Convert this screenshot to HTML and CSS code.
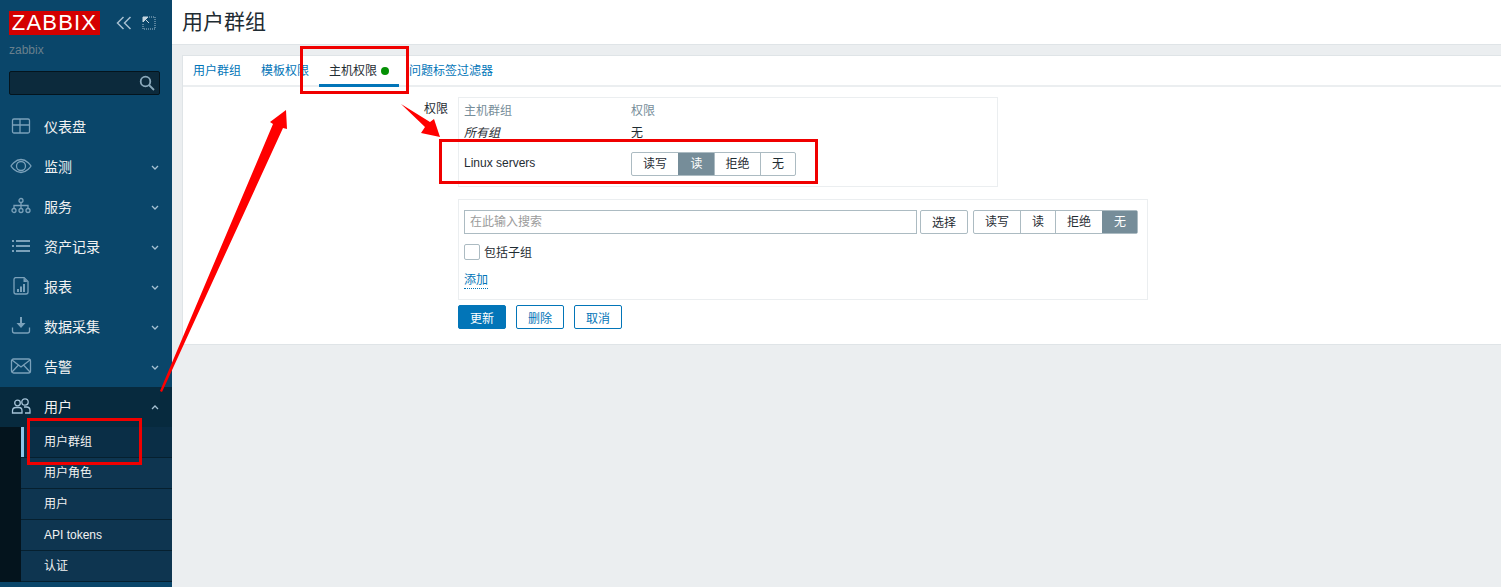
FILE: index.html
```html
<!DOCTYPE html>
<html lang="zh-CN">
<head>
  <meta charset="UTF-8">
  <title>用户群组 | Zabbix</title>
  <link rel="stylesheet" href="styles.css">
</head>
<body>

  <aside class="sidebar">
    <div class="brand">
      <span class="logo">ZABBIX</span>
      <div class="brand-tools">
        <svg class="tool" width="16" height="14" viewBox="0 0 16 14"><path d="M7.5 1 1.5 7l6 6M14.5 1l-6 6 6 6"/></svg>
        <svg class="tool" width="14" height="14" viewBox="0 0 14 14"><path class="dots" d="M7 1h6v12H1V7"/><path class="solid" d="M1 1h5L1 6zM3 3l4 4"/></svg>
      </div>
    </div>
    <div class="server-name">zabbix</div>
    <div class="search-box">
      <svg width="16" height="16" viewBox="0 0 16 16"><circle cx="6.5" cy="6.5" r="4.8"/><path d="m10 10 5 5"/></svg>
    </div>

    <nav class="menu">
      <a class="menu-item">
        <svg class="menu-icon" width="22" height="18" viewBox="0 0 22 18"><path d="M4 2h14a1.500 1.500 0 0 1 1.500 1.500v11A1.500 1.500 0 0 1 18 16H4a1.500 1.500 0 0 1-1.500-1.500v-11A1.500 1.500 0 0 1 4 2zM2.500 8h17M10 2v14"/></svg>
        <span>仪表盘</span>
      </a>
      <a class="menu-item">
        <svg class="menu-icon" width="22" height="18" viewBox="0 0 22 18"><path d="M1 9s4-6.500 10-6.500S21 9 21 9s-4 6.500-10 6.500S1 9 1 9z"/><circle cx="11" cy="9" r="4.500"/></svg>
        <span>监测</span>
        <svg class="chevron" width="8" height="5" viewBox="0 0 8 5"><path d="m1 1 3 3 3-3"/></svg>
      </a>
      <a class="menu-item">
        <svg class="menu-icon" width="22" height="18" viewBox="0 0 22 18"><circle cx="11" cy="3.500" r="2"/><circle cx="4" cy="13.500" r="2"/><circle cx="11" cy="13.500" r="2"/><circle cx="18" cy="13.500" r="2"/><path d="M11 5.500v6M4 11.500V8.500h14v3"/></svg>
        <span>服务</span>
        <svg class="chevron" width="8" height="5" viewBox="0 0 8 5"><path d="m1 1 3 3 3-3"/></svg>
      </a>
      <a class="menu-item">
        <svg class="menu-icon thick" width="22" height="18" viewBox="0 0 22 18"><path d="M2 4h2M6 4h14M2 9h2M6 9h14M2 14h2M6 14h14"/></svg>
        <span>资产记录</span>
        <svg class="chevron" width="8" height="5" viewBox="0 0 8 5"><path d="m1 1 3 3 3-3"/></svg>
      </a>
      <a class="menu-item">
        <svg class="menu-icon" width="22" height="18" viewBox="0 0 22 18"><path d="M6 0.500h8l4 4V15a2 2 0 0 1-2 2H6a2 2 0 0 1-2-2V2.500a2 2 0 0 1 2-2z"/><path class="fill" d="M7 12h2v3H7zM10 9.500h2V15h-2zM13 7h2v8h-2zM13.500 1l4 4h-4z"/></svg>
        <span>报表</span>
        <svg class="chevron" width="8" height="5" viewBox="0 0 8 5"><path d="m1 1 3 3 3-3"/></svg>
      </a>
      <a class="menu-item">
        <svg class="menu-icon" width="22" height="18" viewBox="0 0 22 18"><path d="M2.500 10.500V14a2 2 0 0 0 2 2h13a2 2 0 0 0 2-2v-3.500"/><path class="fill" d="M10 0h2v6h3.500L11 11 6.500 6H10z"/></svg>
        <span>数据采集</span>
        <svg class="chevron" width="8" height="5" viewBox="0 0 8 5"><path d="m1 1 3 3 3-3"/></svg>
      </a>
      <a class="menu-item">
        <svg class="menu-icon" width="22" height="18" viewBox="0 0 22 18"><rect x="1.500" y="2" width="19" height="14" rx="2"/><path d="m2 3 9 7 9-7M2 15l6.500-7M20 15l-6.500-7"/></svg>
        <span>告警</span>
        <svg class="chevron" width="8" height="5" viewBox="0 0 8 5"><path d="m1 1 3 3 3-3"/></svg>
      </a>
      <a class="menu-item is-open">
        <svg class="menu-icon" width="22" height="18" viewBox="0 0 22 18"><circle cx="7.500" cy="6" r="2.800"/><path d="M2.500 16v-2c0-2 1.500-3.500 3.500-3.500h3c2 0 3 1.500 3 3.500v2z"/><circle cx="15" cy="5" r="3.200"/><path d="M14 10h2.500c2 0 3.500 1.500 3.500 3.500V16h-5"/></svg>
        <span>用户</span>
        <svg class="chevron" width="8" height="5" viewBox="0 0 8 5"><path d="m1 4 3-3 3 3"/></svg>
      </a>
      <div class="submenu">
        <a class="submenu-item is-current">用户群组</a>
        <a class="submenu-item">用户角色</a>
        <a class="submenu-item">用户</a>
        <a class="submenu-item">API tokens</a>
        <a class="submenu-item">认证</a>
      </div>
    </nav>
  </aside>

  <main class="main">
    <header class="page-header">
      <h1>用户群组</h1>
    </header>

    <section class="card">
      <div class="tabs">
        <a class="tab">用户群组</a>
        <a class="tab">模板权限</a>
        <a class="tab is-active">主机权限<i class="dot"></i></a>
        <a class="tab">问题标签过滤器</a>
      </div>

      <div class="form-row">
        <label class="form-label">权限</label>
        <div class="form-fields">
          <div class="box perm-table">
            <div class="perm-head">主机群组</div>
            <div class="perm-head">权限</div>
            <div class="perm-all">所有组</div>
            <div>无</div>
            <div>Linux servers</div>
            <div class="segment">
              <span class="seg-wide">读写</span>
              <span class="seg-narrow is-on">读</span>
              <span class="seg-wide">拒绝</span>
              <span class="seg-narrow">无</span>
            </div>
          </div>

          <div class="box add-box">
            <div class="add-line">
              <div class="fake-input">在此输入搜索</div>
              <button class="btn-select">选择</button>
              <div class="segment">
                <span class="seg-wide">读写</span>
                <span class="seg-narrow">读</span>
                <span class="seg-wide">拒绝</span>
                <span class="seg-narrow is-on">无</span>
              </div>
            </div>
            <div class="check-line"><i class="checkbox"></i><span>包括子组</span></div>
            <a class="add-link">添加</a>
          </div>

          <div class="actions">
            <button class="btn btn-primary">更新</button>
            <button class="btn">删除</button>
            <button class="btn">取消</button>
          </div>
        </div>
      </div>
    </section>
  </main>

  <!-- red notes drawn over the screenshot -->
  <svg class="notes" width="1501" height="587" viewBox="0 0 1501 587">
    <rect x="301.500" y="47.500" width="106" height="45"/>
    <rect x="440.500" y="140.500" width="376" height="42"/>
    <rect x="28.500" y="419.500" width="112" height="44"/>
    <polygon points="160,391 273,124 270,122 286,110 287,129 283,128 162,392"/>
    <polygon points="401,104 430,122 434,119 440,137 421,133 425,127"/>
  </svg>

</body>
</html>
```

FILE: styles.css
```css
* {
  box-sizing: border-box;
}

body {
  margin: 0;
  height: 587px;
  display: flex;
  overflow: hidden;
  background-color: #ebeef0;
  color: #1f2c33;
  font-family: "Liberation Sans", "Noto Sans CJK SC", sans-serif;
  font-size: 12px;
}

/* sidebar */
.sidebar {
  width: 172px;
  flex-shrink: 0;
  background-color: #0a466a;
  color: #f2f2f2;
}

.brand {
  display: flex;
  align-items: center;
  height: 24px;
  margin: 11px 0 0 9px;
}

.logo {
  width: 91px;
  height: 24px;
  background-color: #d40000;
  color: #fff;
  font-size: 22px;
  line-height: 24px;
  text-align: center;
  letter-spacing: 1.2px;
}

.brand-tools {
  display: flex;
  align-items: center;
  gap: 10px;
  margin-left: 16px;
}

.tool path {
  fill: none;
  stroke: #a6bfd0;
  stroke-width: 1.5;
}

.tool .dots {
  stroke-width: 1;
  stroke-dasharray: 1 1;
}

.tool .solid {
  fill: #c6d6e0;
  stroke: #c6d6e0;
  stroke-width: 1;
}

.server-name {
  margin: 8px 0 0 9px;
  height: 14px;
  line-height: 14px;
  color: #69808d;
}

.search-box {
  display: flex;
  align-items: center;
  justify-content: flex-end;
  width: 151px;
  height: 24px;
  margin: 14px 0 0 9px;
  padding-right: 4px;
  background-color: #0c2a3c;
  border: 1px solid #04141d;
  border-radius: 2px;
}

.search-box circle,
.search-box path {
  fill: none;
  stroke: #8ba9bb;
  stroke-width: 1.8;
}

.menu {
  margin-top: 12px;
}

.menu-item {
  display: flex;
  align-items: center;
  height: 40px;
  padding-left: 10px;
  padding-bottom: 2px;
  font-size: 14px;
}

.menu-item span {
  margin-left: 12px;
}

.menu-icon {
  flex-shrink: 0;
  fill: none;
  stroke: #7ba1ba;
  stroke-width: 1.3;
}

.menu-icon.thick {
  stroke-width: 2;
}

.menu-icon .fill {
  fill: #7ba1ba;
  stroke: none;
}

.chevron {
  margin-left: auto;
  margin-right: 13px;
  margin-top: 2px;
  fill: none;
  stroke: #a6c1d3;
  stroke-width: 1.3;
}

.menu-item.is-open {
  background-color: #072a3e;
}

.is-open .menu-icon {
  stroke: #a5c3d8;
}

.submenu {
  padding-left: 21px;
  background-color: #04141d;
  font-size: 12px;
}

.submenu-item {
  display: block;
  position: relative;
  height: 31px;
  padding-left: 23px;
  line-height: 30px;
  background-color: #0e3550;
  border-bottom: 1px solid #06202f;
}

.submenu-item.is-current {
  background-color: #0a2e46;
}

/* small light bar on the left of the open page */
.submenu-item.is-current::before {
  content: "";
  position: absolute;
  left: 0;
  top: 0;
  bottom: 0;
  width: 3px;
  background-color: #8cc4ea;
}

/* main area */
.main {
  flex: 1;
  min-width: 0;
}

.page-header {
  height: 45px;
  padding-left: 10px;
  background-color: #fff;
  border-bottom: 1px solid #dfe4e7;
}

.page-header h1 {
  margin: 0;
  font-size: 21px;
  font-weight: normal;
  line-height: 44px;
}

.card {
  margin: 10px 0 0 10px;
  height: 290px;
  background-color: #fff;
  border: 1px solid #dfe4e7;
  border-right: none;
}

.tabs {
  display: flex;
  height: 31px;
  border-bottom: 2px solid #ebeef0;
}

.tab {
  padding: 0 10px;
  line-height: 30px;
  color: #0275b8;
}

.tab.is-active {
  color: #1f2c33;
  height: 31px;
  border-bottom: 3px solid #0275b8;
}

.dot {
  display: inline-block;
  width: 8px;
  height: 8px;
  margin-left: 4px;
  border-radius: 50%;
  background-color: #059005;
}

.form-row {
  display: flex;
  padding-top: 10px;
}

.form-label {
  width: 265px;
  margin-right: 10px;
  padding-top: 2px;
  text-align: right;
  line-height: 21px;
}

.form-fields {
  display: flex;
  flex-direction: column;
}

.box {
  background-color: #fff;
  border: 1px solid #ebeef0;
}

.perm-table {
  display: grid;
  grid-template-columns: 167px 1fr;
  grid-template-rows: 21px 22px 42px;
  align-items: center;
  width: 540px;
  height: 90px;
  padding: 1px 5px 2px;
}

.perm-head {
  color: #768d99;
}

.perm-all {
  font-style: italic;
}

.segment {
  display: flex;
  width: 165px;
  height: 24px;
  border: 1px solid #acbbc2;
  border-radius: 2px;
}

/* the third row is pushed down a little, the first two stay put */
.perm-table .segment {
  margin-top: 1px;
}

.segment span {
  line-height: 22px;
  text-align: center;
  border-left: 1px solid #acbbc2;
}

.segment span:first-child {
  width: 46px;
  border-left: none;
}

.seg-wide {
  width: 46px;
}

.seg-narrow {
  width: 36px;
}

.segment span:last-child {
  width: 35px;
}

.add-line .seg-narrow {
  width: 35px;
}

.add-line .seg-wide + .seg-narrow + .seg-wide {
  width: 47px;
}

.segment .is-on {
  background-color: #768d99;
  border-color: #768d99;
  color: #fff;
}

.add-box {
  width: 690px;
  height: 101px;
  margin-top: 12px;
  padding: 10px 5px 0;
}

.add-line {
  display: flex;
  align-items: flex-start;
}

.fake-input {
  width: 453px;
  height: 24px;
  padding-left: 5px;
  line-height: 22px;
  color: #9b9b9b;
  border: 1px solid #acbbc2;
}

.btn-select {
  width: 48px;
  height: 24px;
  margin: 0 5px 0 3px;
  padding: 0 0 2px;
  background-color: #fff;
  color: #1f2c33;
  border: 1px solid #acbbc2;
  border-radius: 2px;
  font: inherit;
}

.check-line {
  display: flex;
  align-items: center;
  height: 16px;
  margin-top: 10px;
}

.check-line span {
  margin-top: -2px;
}

.checkbox {
  width: 16px;
  height: 16px;
  margin-right: 4px;
  border: 1px solid #acbbc2;
  border-radius: 2px;
}

.add-link {
  display: inline-block;
  margin-top: 12px;
  line-height: 16px;
  color: #0275b8;
  border-bottom: 1px dotted #0275b8;
}

.actions {
  display: flex;
  gap: 10px;
  margin-top: 5px;
}

.btn {
  width: 48px;
  height: 24px;
  padding: 0;
  background-color: #fff;
  color: #0275b8;
  border: 1px solid #0275b8;
  border-radius: 2px;
  font: inherit;
}

.btn-primary {
  background-color: #0275b8;
  color: #fff;
}

/* annotations */
.notes {
  position: absolute;
  left: 0;
  top: 0;
  pointer-events: none;
}

.notes rect {
  fill: none;
  stroke: #f00000;
  stroke-width: 3;
}

.notes polygon {
  fill: #ff0000;
}
```
